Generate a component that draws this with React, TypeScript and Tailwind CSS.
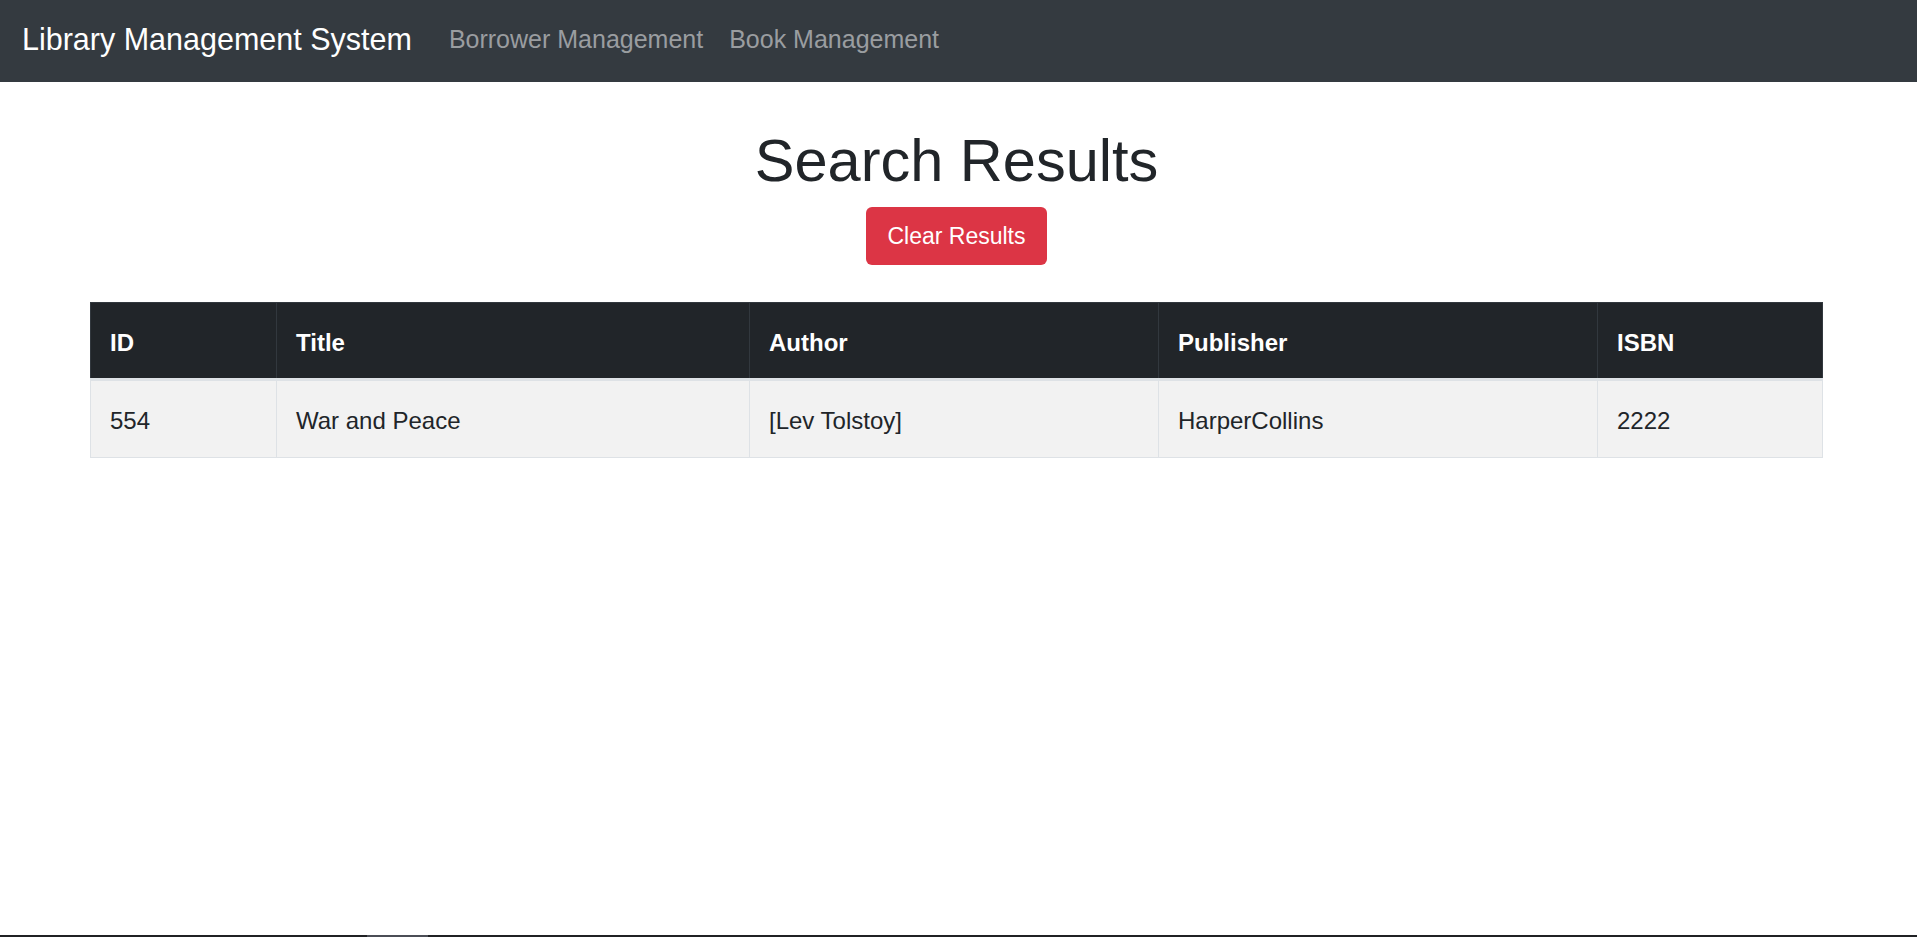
import React from "react"

const books = [
  { id: 554, title: "War and Peace", author: "[Lev Tolstoy]", publisher: "HarperCollins", isbn: "2222" },
]

const columns = [
  { label: "ID", width: "w-[186px]" },
  { label: "Title", width: "w-[473px]" },
  { label: "Author", width: "w-[409px]" },
  { label: "Publisher", width: "w-[439px]" },
  { label: "ISBN", width: "" },
]

export default function App() {
  return (
    <div className="min-h-screen flex flex-col bg-white font-['Liberation_Sans',Arial,sans-serif] text-[#212529]">

      {/* Navbar */}
      <nav className="h-[82px] shrink-0 bg-[#343a40] flex items-center pl-[22px] pr-[23px] pb-[2px]">
        <span className="text-[30.5px] text-white mr-[37px]">Library Management System</span>
        <div className="flex items-center gap-[26px] text-[25px] text-[#9a9da0]">
          <a href="#">Borrower Management</a>
          <a href="#">Book Management</a>
        </div>
      </nav>

      {/* Content */}
      <main className="flex-1 pl-[90px] pr-[94px]">
        <div className="flex flex-col items-center">
          <h1 className="mt-[43px] text-[59.5px] leading-[1.2] font-medium text-[#212529]">Search Results</h1>
          <button className="mt-[11px] h-[58px] px-[21px] rounded-[6px] bg-[#dc3545] text-white text-[23px]">
            Clear Results
          </button>
        </div>

        <table className="mt-[37px] w-full table-fixed border-collapse text-[24px]">
          <thead>
            <tr className="bg-[#212529] text-white">
              {columns.map((c) => (
                <th
                  key={c.label}
                  className={`${c.width} h-[77px] px-[19px] pt-[5px] text-left font-bold border border-[#32383e] border-b-[3px] border-b-[#dee2e6]`}
                >
                  {c.label}
                </th>
              ))}
            </tr>
          </thead>
          <tbody>
            {books.map((b) => (
              <tr key={b.id} className="bg-[#f2f2f2]">
                <td className="h-[78px] px-[19px] pt-[4px] border border-[#dee2e6]">{b.id}</td>
                <td className="h-[78px] px-[19px] pt-[4px] border border-[#dee2e6]">{b.title}</td>
                <td className="h-[78px] px-[19px] pt-[4px] border border-[#dee2e6]">{b.author}</td>
                <td className="h-[78px] px-[19px] pt-[4px] border border-[#dee2e6]">{b.publisher}</td>
                <td className="h-[78px] px-[19px] pt-[4px] border border-[#dee2e6]">{b.isbn}</td>
              </tr>
            ))}
          </tbody>
        </table>
      </main>

      {/* Bottom edge */}
      <div className="h-[2px] shrink-0 flex bg-[#202124]">
        <div className="w-[367px]" />
        <div className="w-[61px] bg-[#4b4e56]" />
      </div>
    </div>
  )
}
